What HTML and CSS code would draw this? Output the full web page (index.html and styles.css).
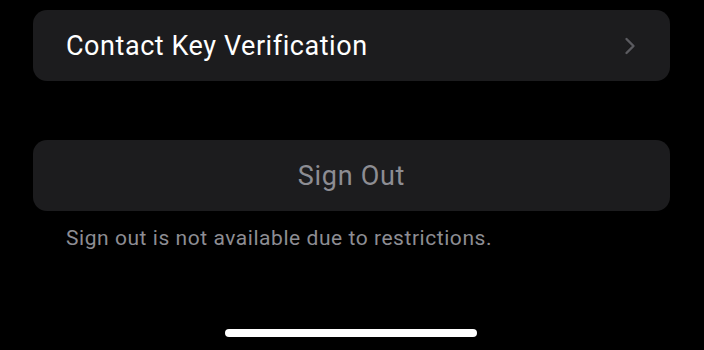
FILE: index.html
```html
<!DOCTYPE html>
<html>
<head>
<meta charset="utf-8">
<link rel="stylesheet" href="styles.css">
</head>
<body>
<div class="screen">
  <div class="card row">
    <span class="label">Contact Key Verification</span>
    <svg class="chev" width="12" height="18" viewBox="0 0 12 18"><path d="M2.5 2 L9.5 9 L2.5 16" fill="none" stroke="#5b5b60" stroke-width="2.4" stroke-linecap="round" stroke-linejoin="round"/></svg>
  </div>
  <div class="card button">Sign Out</div>
  <p class="note">Sign out is not available due to restrictions.</p>
  <div class="spacer"></div>
  <div class="home"></div>
</div>
</body>
</html>
```
FILE: styles.css
```css
html, body { margin: 0; padding: 0; background: #000; }
.screen {
  width: 704px; height: 350px; box-sizing: border-box;
  padding: 10px 34px 0 33px;
  display: flex; flex-direction: column;
  font-family: Roboto, "Liberation Sans", sans-serif;
}
.card {
  background: #1c1c1e; border-radius: 14px; height: 71px; box-sizing: border-box;
}
.row {
  display: flex; align-items: center; justify-content: space-between;
  padding: 0 34px 0 33px;
}
.label { color: #fff; font-size: 27px; letter-spacing: 0.55px; }
.chev { display: block; }
.button {
  margin-top: 59px; display: flex; align-items: center; justify-content: center;
  color: #8d8d93; font-size: 27px; letter-spacing: 0.7px;
}
.note {
  margin: 14px 0 0 33px; color: #8d8d93; font-size: 21px; line-height: 26px; letter-spacing: 0.55px;
}
.spacer { flex: 1; }
.home {
  align-self: center; width: 252px; height: 8px; border-radius: 4px; background: #fff;
  margin: 0 0 13px -1px;
}
```
